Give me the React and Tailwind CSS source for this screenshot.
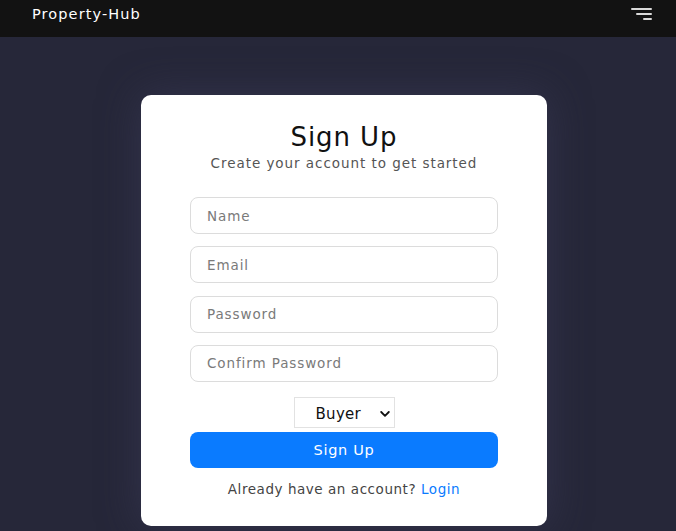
import React, { useState } from "react";

const font = { fontFamily: '"DejaVu Sans", "Open Sans", sans-serif' };

const Navbar = () => (
    <nav className="h-[37px] bg-[#121212] flex items-start justify-between pl-[32px] pr-[24px] pt-[5px]">
        <span className="text-white text-[14.5px] leading-[18px] font-medium tracking-[1.1px]">Property-Hub</span>
        <button className="flex flex-col items-end gap-[3px] w-[21px] mt-[3px]">
            <span className="block h-[2px] w-[21px] bg-[#d9d9d9] rounded-sm" />
            <span className="block h-[2px] w-[16px] bg-[#d9d9d9] rounded-sm" />
            <span className="block h-[2px] w-[9px] bg-[#d9d9d9] rounded-sm" />
        </button>
    </nav>
);

const Field = ({ placeholder, type = "text" }) => (
    <input
        type={type}
        placeholder={placeholder}
        className="block w-full h-[37px] rounded-[8px] border border-[#dcdcdc] bg-white px-[16px] text-[13.5px] tracking-[0.9px] text-[#333] placeholder:text-[#7a7a7a] outline-none"
    />
);

export default function App() {
    const [role, setRole] = useState("buyer");

    return (
        <div className="min-h-screen bg-[#262739]" style={font}>
            <Navbar />
            <main className="flex justify-center pt-[58px] pl-[12px]">
                <form className="w-[406px] bg-white rounded-[10px] shadow-[0_0_40px_rgba(60,60,90,0.6)] px-[49px] pt-[26px] pb-[27px]">
                    <h2 className="text-center text-[26px] leading-[32px] font-medium tracking-[0.9px] text-[#111]">Sign Up</h2>
                    <p className="text-center text-[13.5px] leading-[20px] tracking-[0.95px] text-[#555] mb-[24px]">
                        Create your account to get started
                    </p>
                    <div className="flex flex-col gap-[12.3px]">
                        <Field placeholder="Name" />
                        <Field placeholder="Email" type="email" />
                        <Field placeholder="Password" type="password" />
                        <Field placeholder="Confirm Password" type="password" />
                    </div>
                    <div className="flex justify-center mt-[15px]">
                        <div className="relative w-[101px] h-[31px] border border-[#e2e2e2] bg-white">
                            <select
                                value={role}
                                onChange={(e) => setRole(e.target.value)}
                                className="appearance-none w-full h-full bg-transparent pl-[21px] pt-[3px] text-[15px] tracking-[0.3px] text-[#111] outline-none"
                            >
                                <option value="buyer">Buyer</option>
                                <option value="seller">Seller</option>
                            </select>
                            <svg className="absolute right-[4px] top-[13px] pointer-events-none" width="10" height="6" viewBox="0 0 10 6" fill="none">
                                <path d="M1.2 1L5 4.8L8.8 1" stroke="#111" strokeWidth="1.8" strokeLinecap="round" strokeLinejoin="round" />
                            </svg>
                        </div>
                    </div>
                    <button type="submit" className="block w-full h-[36px] rounded-[8px] bg-[#0a7bff] text-white text-[14.5px] tracking-[0.7px] pt-[2px] mt-[4px]">
                        Sign Up
                    </button>
                    <p className="text-center text-[13.5px] leading-[20px] tracking-[0.55px] text-[#444] mt-[11px]">
                        Already have an account? <a href="#" className="text-[#0a7bff] font-medium">Login</a>
                    </p>
                </form>
            </main>
        </div>
    );
}
